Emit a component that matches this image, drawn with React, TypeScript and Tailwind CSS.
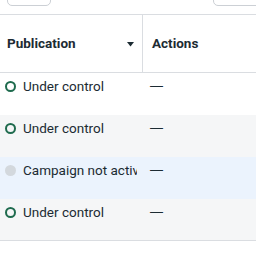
const rows = [
  { status: 'Under control', active: true, bg: 'bg-white' },
  { status: 'Under control', active: true, bg: 'bg-[#f5f6f7]' },
  { status: 'Campaign not active', active: false, bg: 'bg-[#ebf3fd]' },
  { status: 'Under control', active: true, bg: 'bg-[#f5f6f7]' },
];

function StatusDot({ active }: { active: boolean }) {
  if (!active) {
    return <span className="block w-[11px] h-[11px] rounded-full bg-[#d3d8dd] shrink-0" />;
  }
  return <span className="block w-[11px] h-[11px] rounded-full border-[2px] border-[#1f6b4e] shrink-0" />;
}

export default function App() {
  return (
    <div className="w-[256px] h-[256px] overflow-hidden bg-white text-[#1c2b33] font-['Roboto',sans-serif]">
      {/* toolbar stub */}
      <div className="h-[15px] border-b border-[#dadde1] flex justify-between pl-[7px] overflow-hidden">
        <div className="w-[44px] h-[30px] -mt-[24px] rounded-[5px] border border-[#ccd0d5]" />
        <div className="w-[60px] h-[30px] -mt-[24px] -mr-[17px] rounded-[5px] border border-[#ccd0d5]" />
      </div>

      <div className="grid grid-cols-[143px_1fr]">
        <div className="h-[58px] border-b border-r border-[#dadde1] flex items-center justify-between pl-[7px] pr-[8px]">
          <span className="text-[13.5px] font-bold">Publication</span>
          <svg width="7" height="5" viewBox="0 0 7 5" className="mt-[1px]">
            <path d="M0 0h7L3.5 4.5z" fill="#1c2b33" />
          </svg>
        </div>
        <div className="h-[58px] border-b border-[#dadde1] flex items-center pl-[9px]">
          <span className="text-[13.5px] font-bold">Actions</span>
        </div>

        {rows.map((r, i) => (
          <div key={i} className={`col-span-2 grid grid-cols-[143px_1fr] h-[42px] ${r.bg} ${i === rows.length - 1 ? 'border-b border-[#dadde1]' : ''}`}>
            <div className="flex items-start gap-[7px] pl-[5px] pr-[6px] pt-[5px] overflow-hidden">
              <span className="h-[16px] flex items-center">
                <StatusDot active={r.active} />
              </span>
              <span className="text-[13.5px] leading-[16px] whitespace-nowrap overflow-hidden">{r.status}</span>
            </div>
            <div className="pl-[7px] pt-[5px] text-[13px] leading-[16px] font-['Liberation_Sans',sans-serif]">—</div>
          </div>
        ))}
      </div>
    </div>
  );
}
